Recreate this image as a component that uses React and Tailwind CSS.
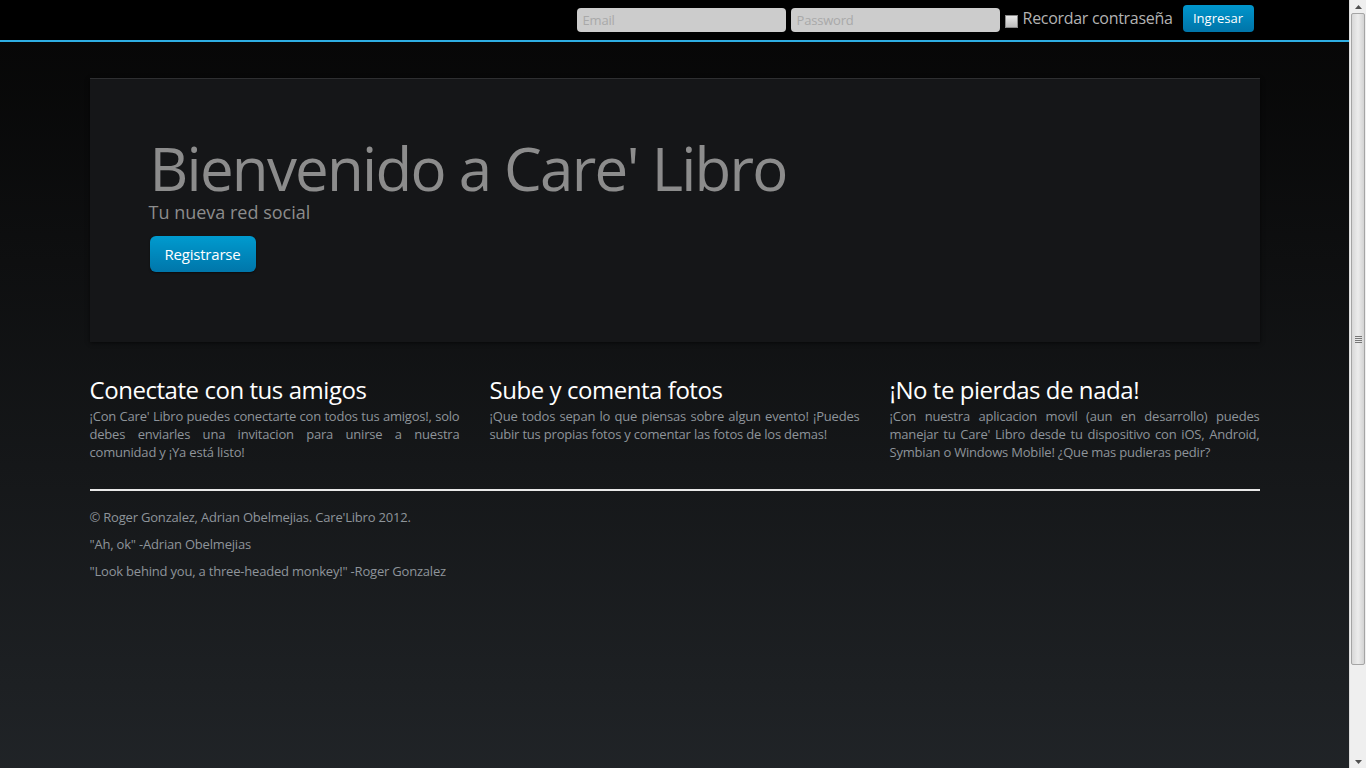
export default function App() {
  const font = { fontFamily: '"Open Sans", "Noto Sans", sans-serif' };
  return (
    <div className="h-screen flex overflow-hidden" style={font}>
      <div className="flex-1 overflow-hidden">
        <div className="min-h-[874px] bg-gradient-to-b from-[#060606] to-[#24282c]">
          {/* Navbar */}
          <div className="h-[42px] bg-black border-b-2 border-[#2eaee3]">
            <div className="w-[1170px] mx-auto flex items-center justify-end h-[40px] pr-[6px]">
              <input
                placeholder="Email"
                className="w-[209px] h-[24px] rounded-[4px] bg-[#cccccc] px-[6px] text-[13px] tracking-[-0.2px] text-[#555] placeholder:text-[#a9a9a9] outline-none"
              />
              <input
                type="password"
                placeholder="Password"
                className="ml-[5px] w-[209px] h-[24px] rounded-[4px] bg-[#cccccc] px-[6px] text-[13px] tracking-[-0.2px] text-[#555] placeholder:text-[#a9a9a9] outline-none"
              />
              <span className="ml-[5px] mt-[3px] w-[13px] h-[13px] border border-[#888] bg-gradient-to-b from-[#e8e8e8] to-[#bdbdbd]" />
              <span className="ml-[5px] text-[16px] tracking-[-0.3px] text-[#b3b3b3] leading-[20px] mb-[5px]">Recordar contraseña</span>
              <button className="ml-[10px] mb-[3px] h-[27px] w-[71px] rounded-[4px] bg-gradient-to-b from-[#0096cc] to-[#0074a8] text-white text-[13px]">
                Ingresar
              </button>
            </div>
          </div>

          {/* Container */}
          <div className="w-[1170px] mx-auto pt-[36px]">
            <div className="bg-[#151618] border-t border-[#2e2f31] shadow-[0_1px_4px_rgba(0,0,0,0.6)] px-[60px] pt-[59px] pb-[70px]">
              <h1 className="text-[60px] leading-[60px] tracking-[-1.75px] text-[#8c8c8c]">Bienvenido a Care' Libro</h1>
              <p className="text-[18px] leading-[30px] text-[#8c8c8c] -ml-px -mt-px">Tu nueva red social</p>
              <button className="mt-[9px] h-[36px] w-[106px] rounded-[6px] bg-gradient-to-b from-[#009bcf] to-[#0076aa] text-white text-[15px] tracking-[-0.2px] shadow-[0_1px_2px_rgba(0,0,0,0.5)]">
                Registrarse
              </button>
            </div>

            <div className="grid grid-cols-3 gap-[30px] mt-[30px]">
              <div>
                <h2 className="text-[24px] leading-[36px] tracking-[-0.45px] text-white">Conectate con tus amigos</h2>
                <p className="text-[13px] leading-[18px] tracking-[-0.2px] text-[#8e949a] text-justify -mt-px">
                  ¡Con Care' Libro puedes conectarte con todos tus amigos!, solo debes enviarles una invitacion para unirse a nuestra comunidad y ¡Ya está listo!
                </p>
              </div>
              <div>
                <h2 className="text-[24px] leading-[36px] tracking-[-0.45px] text-white">Sube y comenta fotos</h2>
                <p className="text-[13px] leading-[18px] tracking-[-0.2px] text-[#8e949a] text-justify -mt-px">
                  ¡Que todos sepan lo que piensas sobre algun evento! ¡Puedes subir tus propias fotos y comentar las fotos de los demas!
                </p>
              </div>
              <div>
                <h2 className="text-[24px] leading-[36px] tracking-[-0.45px] text-white">¡No te pierdas de nada!</h2>
                <p className="text-[13px] leading-[18px] tracking-[-0.2px] text-[#8e949a] text-justify -mt-px">
                  ¡Con nuestra aplicacion movil (aun en desarrollo) puedes manejar tu Care' Libro desde tu dispositivo con iOS, Android, Symbian o Windows Mobile! ¿Que mas pudieras pedir?
                </p>
              </div>
            </div>

            <hr className="mt-[28px] border-0 h-[2px] bg-[#e8e8e8]" />

            <div className="pt-[17px] text-[13px] leading-[18px] tracking-[-0.2px] text-[#8e949a] flex flex-col gap-[9px]">
              <p>© Roger Gonzalez, Adrian Obelmejias. Care'Libro 2012.</p>
              <p>"Ah, ok" -Adrian Obelmejias</p>
              <p>"Look behind you, a three-headed monkey!" -Roger Gonzalez</p>
            </div>
          </div>
        </div>
      </div>

      {/* Scrollbar */}
      <div className="w-[17px] h-screen bg-[#efefef] border-l border-[#dcdcdc] flex flex-col items-center">
        <div className="h-[13px] w-full flex items-center justify-center">
          <svg width="7" height="4" viewBox="0 0 7 4"><path d="M0 4 L3.5 0 L7 4 Z" fill="#505050" /></svg>
        </div>
        <div className="w-[14px] h-[652px] rounded-[2px] border border-[#a5a5a5] bg-gradient-to-r from-[#d8d8d8] via-[#ececec] to-[#d4d4d4] flex items-center justify-center">
          <div className="flex flex-col gap-[1px]">
            <div className="w-[7px] h-px bg-[#777]" />
            <div className="w-[7px] h-px bg-[#777]" />
            <div className="w-[7px] h-px bg-[#777]" />
            <div className="w-[7px] h-px bg-[#777]" />
          </div>
        </div>
        <div className="flex-1" />
        <div className="h-[13px] w-full flex items-center justify-center">
          <svg width="7" height="4" viewBox="0 0 7 4"><path d="M0 0 L3.5 4 L7 0 Z" fill="#505050" /></svg>
        </div>
      </div>
    </div>
  );
}
